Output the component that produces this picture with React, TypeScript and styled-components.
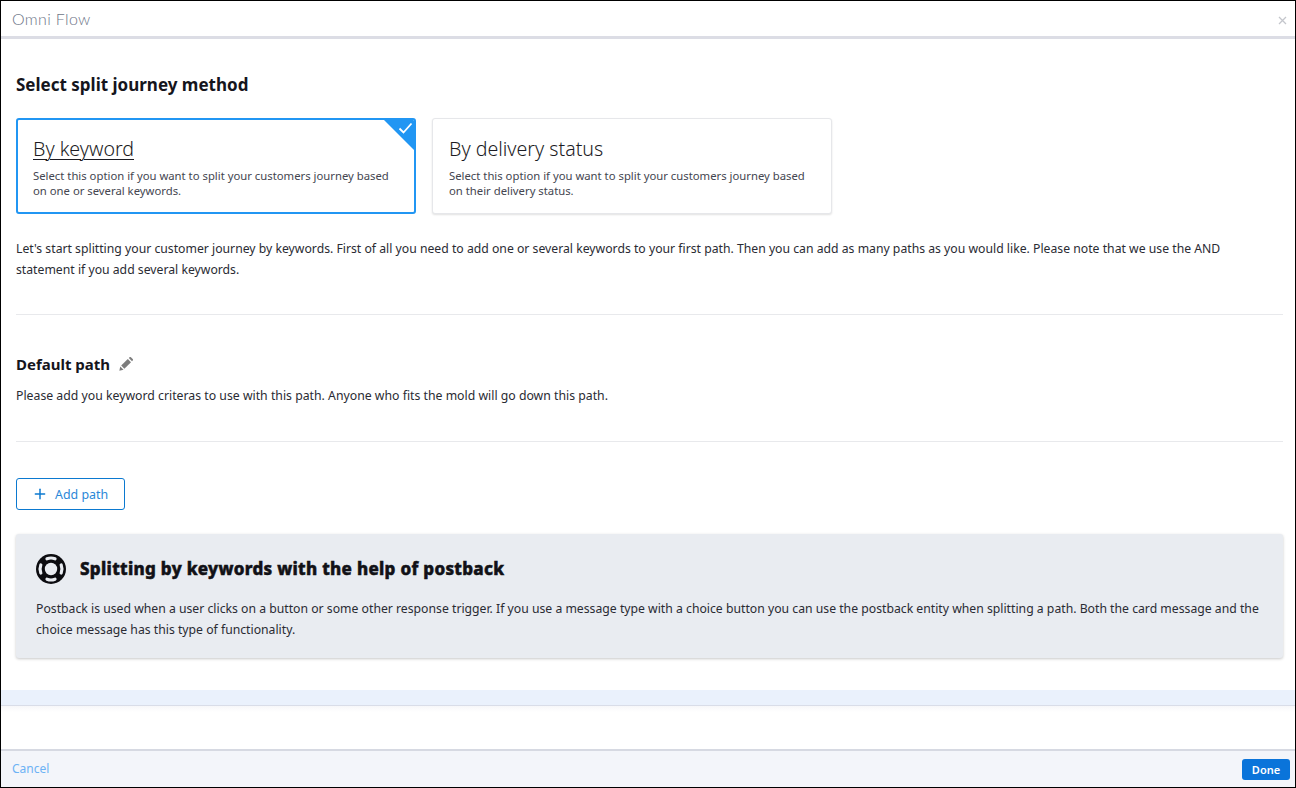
import React from 'react';
import styled, { createGlobalStyle } from 'styled-components';
import { Plus } from 'lucide-react';

const GlobalStyle = createGlobalStyle`
  html, body {
    margin: 0;
    padding: 0;
    height: 100%;
    background: #fff;
  }
  * {
    box-sizing: border-box;
  }
`;

const Frame = styled.div`
  width: 1296px;
  height: 788px;
  display: flex;
  flex-direction: column;
  border: 1px solid #000;
  font-family: "Noto Sans", "Open Sans", sans-serif;
  color: #1c1c24;
  overflow: hidden;
`;

const Header = styled.header`
  height: 38px;
  flex: none;
  display: flex;
  align-items: center;
  justify-content: space-between;
  padding: 0 8px 0 11px;
  border-bottom: 3px solid #dcdde5;
`;

const HeaderTitle = styled.div`
  font-family: Lato, sans-serif;
  font-size: 16px;
  font-weight: 300;
  letter-spacing: 0.35px;
  color: #6d7587;
`;

const CloseIcon = styled.svg`
  width: 9px;
  height: 9px;
  margin-top: 4px;
  stroke: #c4c6cc;
  stroke-width: 1.3;
`;

const Content = styled.main`
  flex: 1;
  padding: 35px 12px 0 15px;
`;

const Heading = styled.h1`
  margin: 0;
  font-size: 17px;
  line-height: 22px;
  font-weight: 700;
  color: #15151c;
`;

const CardRow = styled.div`
  display: flex;
  gap: 16px;
  margin-top: 22px;
`;

const Card = styled.div<{ $selected?: boolean }>`
  position: relative;
  width: 400px;
  height: 96px;
  padding: 17px 16px 0;
  border-radius: 3px;
  overflow: hidden;
  background: #fff;
  border: ${({ $selected }) => ($selected ? '2px solid #2196f3' : '1px solid #e6e7ea')};
  box-shadow: ${({ $selected }) => ($selected ? 'none' : '0 1px 2px rgba(0, 0, 0, 0.12)')};
`;

const CardTitle = styled.div<{ $selected?: boolean }>`
  font-size: 19.6px;
  font-weight: 300;
  line-height: 26px;
  margin-left: ${({ $selected }) => ($selected ? '-1px' : '0')};
  margin-top: ${({ $selected }) => ($selected ? '-1px' : '0')};
  text-decoration: ${({ $selected }) => ($selected ? 'underline' : 'none')};
  text-underline-offset: 3px;
  text-decoration-thickness: 1px;
  color: #1c1c24;
`;

const CardText = styled.p<{ $selected?: boolean }>`
  margin: 6px 0 0 ${({ $selected }) => ($selected ? '-1px' : '0')};
  font-size: 11.3px;
  line-height: 15px;
  color: #444650;
`;

const Corner = styled.div`
  position: absolute;
  top: 0;
  right: 0;
  width: 0;
  height: 0;
  border-top: 30px solid #2196f3;
  border-left: 30px solid transparent;
`;

const Check = styled.svg`
  position: absolute;
  top: 2px;
  right: 1px;
  width: 15px;
  height: 12px;
  fill: none;
  stroke: #fff;
  stroke-width: 1.8;
`;

const BodyText = styled.p`
  margin: 0;
  font-size: 12.23px;
  line-height: 21px;
  color: #2a2b33;
`;

const Intro = styled(BodyText)`
  margin-top: 24px;
`;

const Divider = styled.hr`
  margin: 0;
  border: none;
  border-top: 1px solid #e8e9ec;
`;

const IntroDivider = styled(Divider)`
  margin-top: 34px;
`;

const PathTitleRow = styled.div`
  display: flex;
  align-items: center;
  gap: 9px;
  margin-top: 38px;
`;

const PathTitle = styled.h2`
  margin: 0;
  font-size: 15px;
  line-height: 22px;
  font-weight: 700;
  color: #15151c;
`;

const PencilIcon = styled.svg`
  width: 14px;
  height: 14px;
  fill: #7d7d7d;
`;

const PathText = styled(BodyText)`
  margin-top: 10px;
  font-size: 12.27px;
`;

const PathDivider = styled(Divider)`
  margin-top: 35px;
`;

const AddButton = styled.button`
  display: flex;
  align-items: center;
  gap: 7px;
  width: 109px;
  height: 32px;
  margin-top: 36px;
  padding: 0 0 0 15px;
  background: #fff;
  border: 1px solid #0b79d0;
  border-radius: 3px;
  font-family: inherit;
  font-size: 12.4px;
  color: #2a87d8;
`;

const InfoPanel = styled.section`
  height: 124px;
  margin-top: 24px;
  padding: 20px 20px 0;
  background: #e9ecf1;
  border-radius: 3px;
  box-shadow: 0 1px 3px rgba(0, 0, 0, 0.22);
`;

const InfoHead = styled.div`
  display: flex;
  align-items: center;
  gap: 14px;
`;

const InfoTitle = styled.h3`
  margin: 0;
  font-size: 17px;
  line-height: 30px;
  font-weight: 800;
  -webkit-text-stroke: 0.5px #111;
  letter-spacing: 0.3px;
  color: #111118;
`;

const InfoText = styled(BodyText)`
  margin-top: 14px;
`;

const Strip = styled.div`
  height: 16px;
  flex: none;
  background: #eaf1fc;
  border-bottom: 1px solid #d9dde8;
`;

const Spacer = styled.div`
  height: 43px;
  flex: none;
  background: linear-gradient(#f7f7f9, #fff 6px);
`;

const Footer = styled.footer`
  height: 38px;
  flex: none;
  display: flex;
  align-items: center;
  justify-content: space-between;
  padding: 0 5px 0 11px;
  background: #f3f5fa;
  border-top: 2px solid #d6d9e2;
`;

const CancelLink = styled.a`
  margin-top: -1px;
  font-size: 12px;
  color: #6cb2f5;
`;

const DoneButton = styled.button`
  width: 48px;
  height: 21px;
  margin-top: 1px;
  padding: 0;
  border: none;
  border-radius: 3px;
  background: #0a74da;
  color: #fff;
  font-family: inherit;
  font-size: 11px;
  font-weight: 600;
`;

const App = () => {
    return (
        <>
            <GlobalStyle />
            <Frame>
                <Header>
                    <HeaderTitle>Omni Flow</HeaderTitle>
                    <CloseIcon viewBox="0 0 9 9">
                        <path d="M1 1l7 7M8 1l-7 7" />
                    </CloseIcon>
                </Header>
                <Content>
                    <Heading>Select split journey method</Heading>
                    <CardRow>
                        <Card $selected>
                            <CardTitle $selected>By keyword</CardTitle>
                            <CardText $selected>
                                Select this option if you want to split your customers journey based
                                <br />
                                on one or several keywords.
                            </CardText>
                            <Corner />
                            <Check viewBox="0 0 15 12">
                                <path d="M1.5 6.5l4 4 8-9" />
                            </Check>
                        </Card>
                        <Card>
                            <CardTitle>By delivery status</CardTitle>
                            <CardText>
                                Select this option if you want to split your customers journey based
                                <br />
                                on their delivery status.
                            </CardText>
                        </Card>
                    </CardRow>
                    <Intro>
                        Let's start splitting your customer journey by keywords. First of all you need to add one or several keywords to your first path. Then you can add as many paths as you would like. Please note that we use the AND
                        <br />
                        statement if you add several keywords.
                    </Intro>
                    <IntroDivider />
                    <PathTitleRow>
                        <PathTitle>Default path</PathTitle>
                        <PencilIcon viewBox="0 0 14 14">
                            <path d="M0.3 13.7l1-4.2 3.2 3.2z" />
                            <path d="M2.2 8.6L8.8 2l3.2 3.2-6.6 6.6z" />
                            <path d="M9.8 1l.7-.7a1 1 0 0 1 1.4 0l1.8 1.8a1 1 0 0 1 0 1.4l-.7.7z" />
                        </PencilIcon>
                    </PathTitleRow>
                    <PathText>Please add you keyword criteras to use with this path. Anyone who fits the mold will go down this path.</PathText>
                    <PathDivider />
                    <AddButton>
                        <Plus size={16} color="#0b79d0" strokeWidth={2.2} />
                        Add path
                    </AddButton>
                    <InfoPanel>
                        <InfoHead>
                            <svg width="30" height="30" viewBox="0 0 30 30">
                                <circle cx="15" cy="15" r="15" fill="#0c0c10" />
                                <circle cx="15" cy="15" r="6.2" fill="#e9ecf1" />
                                <g fill="none" stroke="#e9ecf1" strokeWidth="3.2" strokeLinecap="round">
                                    <path d="M11 4.8a11 11 0 0 1 8 0" />
                                    <path d="M25.2 11a11 11 0 0 1 0 8" />
                                    <path d="M19 25.2a11 11 0 0 1-8 0" />
                                    <path d="M4.8 19a11 11 0 0 1 0-8" />
                                </g>
                            </svg>
                            <InfoTitle>Splitting by keywords with the help of postback</InfoTitle>
                        </InfoHead>
                        <InfoText>
                            Postback is used when a user clicks on a button or some other response trigger. If you use a message type with a choice button you can use the postback entity when splitting a path. Both the card message and the
                            <br />
                            choice message has this type of functionality.
                        </InfoText>
                    </InfoPanel>
                </Content>
                <Strip />
                <Spacer />
                <Footer>
                    <CancelLink>Cancel</CancelLink>
                    <DoneButton>Done</DoneButton>
                </Footer>
            </Frame>
        </>
    );
};

export default App;
